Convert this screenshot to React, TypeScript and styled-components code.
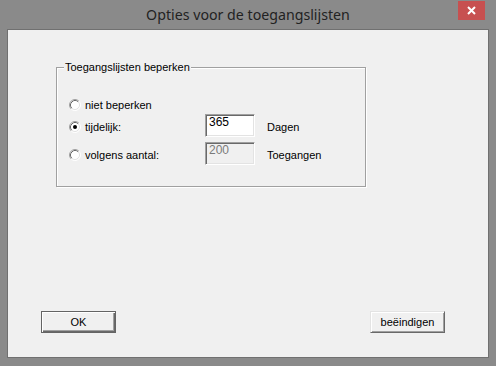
import styled, { createGlobalStyle } from "styled-components"

const GlobalStyle = createGlobalStyle`
  html, body { margin: 0; padding: 0; background: #8a8a8a; }
  body { font-family: "Liberation Sans", Arial, sans-serif; }
`

// Window frame
const Frame = styled.div`
  background: #8a8a8a;
  display: flex;
  flex-direction: column;
  height: 366px;
  width: 496px;
  box-sizing: border-box;
  padding: 0 7px 8px 7px;
`
const TitleBar = styled.div`
  align-items: start;
  display: grid;
  grid-template-columns: 1fr auto 1fr;
  height: 29px;
  margin: 0 -7px;
`
const Title = styled.div`
  color: #222;
  font-family: "Noto Sans", sans-serif;
  font-size: 14.2px;
  grid-column: 2;
  line-height: 29px;
  white-space: nowrap;
`
const CloseButton = styled.div`
  align-items: center;
  background: #c75050;
  display: flex;
  grid-column: 3;
  height: 19px;
  justify-content: center;
  justify-self: end;
  margin: 1px 11px 0 0;
  width: 27px;
`
const Client = styled.div`
  background: #f0f0f0;
  border: 1px solid #707070;
  display: flex;
  flex: 1;
  flex-direction: column;
  justify-content: space-between;
  padding: 31px 43px 24px 33px;
`

// Group box
const Group = styled.fieldset`
  border: 1px solid #a0a0a0;
  box-shadow: inset 1px 1px 0 #fff, 1px 1px 0 #fff;
  box-sizing: border-box;
  margin: 0 0 0 15px;
  padding: 0;
  width: 310px;
`
const Legend = styled.legend`
  background: #f0f0f0;
  color: #000;
  font-size: 11px;
  margin-left: 7px;
  padding: 0 1px;
`
const GroupBody = styled.div`
  padding: 20px 0 21px 12px;
`
const Row = styled.div<{ $h: number }>`
  align-items: center;
  display: grid;
  grid-template-columns: 124px 50px auto;
  column-gap: 12px;
  height: ${p => p.$h}px;
  &:last-child { margin-top: 5px; }
`
const Choice = styled.label`
  align-items: center;
  color: #000;
  display: flex;
  font-size: 11px;
  gap: 4px;
  padding-top: 2px;
`
const Unit = styled.span`
  color: #000;
  font-size: 11px;
  padding-top: 3px;
`
const Field = styled.div<{ $disabled?: boolean }>`
  background: ${p => p.$disabled ? "#f0f0f0" : "#fff"};
  border-style: solid;
  border-width: 1px;
  border-color: #a0a0a0 #fff #fff #a0a0a0;
  box-shadow: inset 1px 1px 0 #696969, inset -1px -1px 0 #e3e3e3;
  box-sizing: border-box;
  color: ${p => p.$disabled ? "#7a7a7a" : "#000"};
  font-size: 12px;
  height: 100%;
  line-height: 13px;
  padding: 1px 3px;
`

// Buttons
const ButtonRow = styled.div`
  display: flex;
  justify-content: space-between;
`
const Button = styled.div<{ $default?: boolean }>`
  align-items: center;
  background: #f0f0f0;
  border: 1px solid;
  border-color: ${p => p.$default ? "#646464" : "#e3e3e3 #696969 #696969 #e3e3e3"};
  box-shadow: ${p => p.$default
    ? "inset 1px 1px 0 #fff, inset -1px -1px 0 #696969, inset -2px -2px 0 #a0a0a0"
    : "inset 1px 1px 0 #fff, inset -1px -1px 0 #a0a0a0"};
  box-sizing: border-box;
  color: #000;
  display: flex;
  font-size: 11px;
  height: 22px;
  justify-content: center;
  width: 75px;
`

const Radio = ({ checked }: { checked?: boolean }) => (
  <svg width="12" height="12" viewBox="0 0 12 12">
    <circle cx="6" cy="6" r="5" fill="#fff" />
    <path d="M2.11 9.89A5.5 5.5 0 0 1 9.89 2.11" fill="none" stroke="#a0a0a0" />
    <path d="M9.89 2.11A5.5 5.5 0 0 1 2.11 9.89" fill="none" stroke="#fff" />
    <path d="M2.82 9.18A4.5 4.5 0 0 1 9.18 2.82" fill="none" stroke="#696969" />
    <path d="M9.18 2.82A4.5 4.5 0 0 1 2.82 9.18" fill="none" stroke="#e3e3e3" />
    {checked && <circle cx="6" cy="6" r="2" fill="#000" />}
  </svg>
)

export default function App() {
  return (
    <>
      <GlobalStyle />
      <Frame>
        <TitleBar>
          <Title>Opties voor de toegangslijsten</Title>
          <CloseButton>
            <svg width="9" height="9" viewBox="0 0 9 9">
              <path d="M1 1L8 8M8 1L1 8" stroke="#fff" strokeWidth="2" />
            </svg>
          </CloseButton>
        </TitleBar>
        <Client>
          <Group>
            <Legend>Toegangslijsten beperken</Legend>
            <GroupBody>
              <Row $h={21}>
                <Choice><Radio />niet beperken</Choice>
              </Row>
              <Row $h={23}>
                <Choice><Radio checked />tijdelijk:</Choice>
                <Field>365</Field>
                <Unit>Dagen</Unit>
              </Row>
              <Row $h={23}>
                <Choice><Radio />volgens aantal:</Choice>
                <Field $disabled>200</Field>
                <Unit>Toegangen</Unit>
              </Row>
            </GroupBody>
          </Group>
          <ButtonRow>
            <Button $default>OK</Button>
            <Button>beëindigen</Button>
          </ButtonRow>
        </Client>
      </Frame>
    </>
  )
}
